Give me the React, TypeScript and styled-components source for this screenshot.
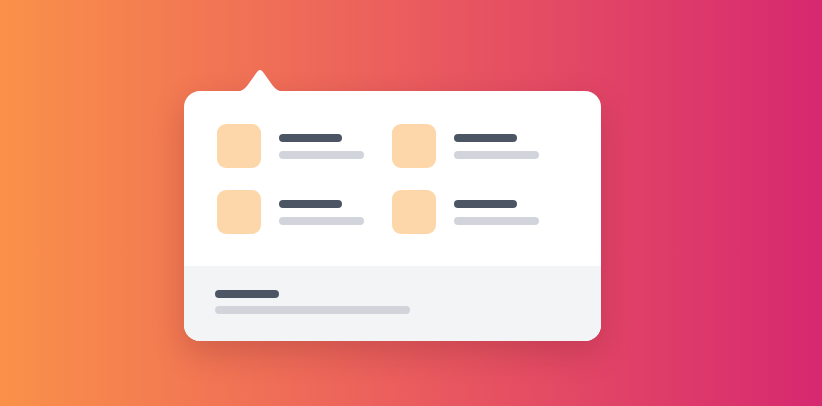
import React from 'react';
import styled, { createGlobalStyle } from 'styled-components';

const GlobalStyle = createGlobalStyle`
  html, body {
    margin: 0;
    padding: 0;
    font-family: "Inter", "Liberation Sans", sans-serif;
  }
`;

const Page = styled.div`
  width: 822px;
  height: 406px;
  box-sizing: border-box;
  padding: 91px 0 0 184px;
  background: linear-gradient(90deg, #fa9149 0%, #ea5c5e 50%, #d72870 100%);
  overflow: hidden;
`;

const Popover = styled.div`
  position: relative;
  width: 417px;
  height: 250px;
  border-radius: 16px;
  background: #ffffff;
  box-shadow: 0 12px 32px rgba(90, 20, 30, 0.22);
  display: flex;
  flex-direction: column;
`;

const Arrow = styled.svg`
  position: absolute;
  top: -23px;
  left: 48px;
  width: 56px;
  height: 24px;
`;

const Grid = styled.div`
  flex: 1;
  box-sizing: border-box;
  padding: 33px 0 0 33px;
  display: grid;
  grid-template-columns: 175px 175px;
  grid-auto-rows: 44px;
  row-gap: 22px;
`;

const Item = styled.div`
  display: flex;
  align-items: center;
  gap: 18px;
`;

const Tile = styled.div`
  width: 44px;
  height: 44px;
  border-radius: 9px;
  background: #fdd7aa;
`;

const Lines = styled.div`
  display: flex;
  flex-direction: column;
  gap: 9px;
`;

const Bar = styled.div<{ $w: number; $dark?: boolean }>`
  width: ${(p) => p.$w}px;
  height: 8px;
  border-radius: 4px;
  background: ${(p) => (p.$dark ? '#4b5563' : '#d1d5db')};
`;

const Footer = styled.div`
  height: 75px;
  box-sizing: border-box;
  padding: 24px 0 0 31px;
  background: #f3f4f6;
  border-radius: 0 0 16px 16px;
  display: flex;
  flex-direction: column;
  gap: 8px;
`;

function App() {
  return (
    <Page>
      <GlobalStyle />
      <Popover>
        <Arrow viewBox="0 0 56 24">
          <path
            d="M0 24 C9 24 11 22 15 18 L25 4 Q28 0 31 4 L41 18 C45 22 47 24 56 24 Z"
            fill="#ffffff"
          />
        </Arrow>
        <Grid>
          {[0, 1, 2, 3].map((i) => (
            <Item key={i}>
              <Tile />
              <Lines>
                <Bar $w={63} $dark />
                <Bar $w={85} />
              </Lines>
            </Item>
          ))}
        </Grid>
        <Footer>
          <Bar $w={64} $dark />
          <Bar $w={195} />
        </Footer>
      </Popover>
    </Page>
  );
}

export default App;
